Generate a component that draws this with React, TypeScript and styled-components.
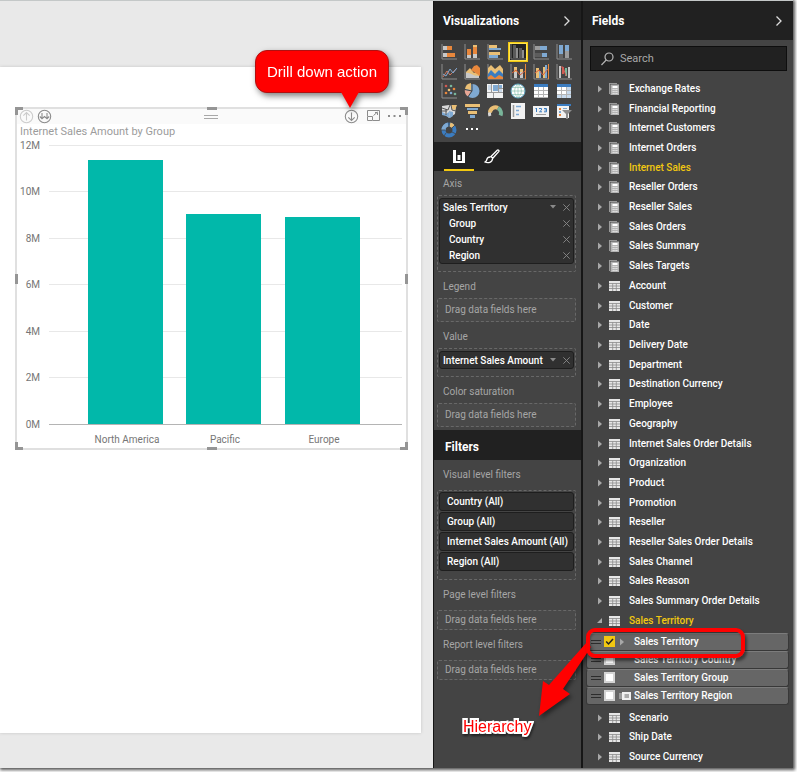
import React from "react";
import styled, { createGlobalStyle, css } from "styled-components";

const UI_FONT = 'Roboto, "Open Sans", sans-serif';

const C = {
  panel: "#444444",
  dark: "#212121",
  card: "#303030",
  text: "#ffffff",
  muted: "#a6a6a6",
  yellow: "#f2c811",
  teal: "#01b8aa",
  red: "#ff0000",
};

const GlobalStyle = createGlobalStyle`
  *, *::before, *::after { box-sizing: border-box; }
  body { margin: 0; background: #ffffff; font-family: ${UI_FONT}; }
  button { border: 0; padding: 0; margin: 0; background: none; color: inherit; font: inherit; cursor: pointer; }
  ul { list-style: none; margin: 0; padding: 0; }
  h2, h3, p { margin: 0; font: inherit; }
  svg { display: block; }
`;

/* ---------- window ---------- */

const Page = styled.div`
  padding: 0 4px 4px 0;
`;

const Window = styled.div`
  display: grid;
  grid-template-columns: minmax(0, 1fr) 149px 211px;
  min-height: calc(100vh - 4px);
  border-top: 1px solid #c4c8c8;
  background: #e9e9e9;
  box-shadow: 1px 1px 3px 1px #555555;
`;

/* ---------- report ---------- */

const Report = styled.main`
  display: flex;
  padding: 66px 12px 35px 0;
`;

const ReportPage = styled.section`
  flex: 1;
  min-width: 0;
  padding: 40px 13px 40px 15px;
  background: #ffffff;
  box-shadow: 0 0 3px #c4c4c4;
`;

const Visual = styled.article`
  position: relative;
  border: 2px solid #e0e0e0;
  background: #ffffff;
`;

type Corner = "tl" | "tr" | "bl" | "br";

const CornerHandle = styled.span<{ $at: Corner }>`
  position: absolute;
  width: 8px;
  height: 8px;
  border: 0 solid #959595;
  ${({ $at }) => ($at[0] === "t" ? "top: -2px; border-top-width: 3px;" : "bottom: -2px; border-bottom-width: 3px;")}
  ${({ $at }) => ($at[1] === "l" ? "left: -2px; border-left-width: 3px;" : "right: -2px; border-right-width: 3px;")}
`;

type Side = "top" | "right" | "bottom" | "left";

const EdgeHandle = styled.span<{ $side: Side }>`
  position: absolute;
  background: #959595;
  ${({ $side }) => `${$side}: -2px;`}
  ${({ $side }) =>
    $side === "top" || $side === "bottom"
      ? "left: 50%; width: 10px; height: 3px; margin-left: -5px;"
      : "top: 50%; width: 3px; height: 10px; margin-top: -5px;"}
`;

const VisualToolbar = styled.div`
  display: grid;
  grid-template-columns: 1fr auto 1fr;
  align-items: center;
  height: 15px;
  padding: 0 4px 0 2px;
  background: #fafafa;
`;

const ToolGroup = styled.div<{ $end?: boolean }>`
  display: flex;
  align-items: center;
  gap: ${({ $end }) => ($end ? 8 : 3)}px;
  justify-content: ${({ $end }) => ($end ? "flex-end" : "flex-start")};
`;

const ToolButton = styled.button<{ $faded?: boolean }>`
  position: relative;
  color: ${({ $faded }) => ($faded ? "#cccccc" : "#8c8c8c")};
`;

const Grip = styled.span`
  width: 14px;
  height: 4px;
  border: solid #a8a8a8;
  border-width: 1px 0;
`;

const VisualTitle = styled.h3`
  padding: 0 3px;
  font-size: 11px;
  line-height: 15px;
  color: #9c9c9c;
  white-space: nowrap;
`;

const Chart = styled.svg`
  width: 100%;
  height: auto;
  font-family: ${UI_FONT};
  font-size: 10px;
  fill: #767676;
`;

const Callout = styled.span`
  position: absolute;
  right: -30px;
  bottom: 31px;
  z-index: 2;
  padding: 0 11px 0 11px;
  border: 1px solid #b01010;
  border-radius: 12px;
  background: ${C.red};
  color: #ffffff;
  font: 15px/41px "Liberation Sans", Arial, sans-serif;
  white-space: nowrap;
  filter: drop-shadow(2px 3px 3px rgba(0, 0, 0, 0.5));
  &::after {
    content: "";
    position: absolute;
    right: 29px;
    top: 100%;
    border: solid transparent;
    border-width: 16px 9px 0 9px;
    border-top-color: ${C.red};
  }
`;

/* ---------- shared pane parts ---------- */

const Pane = styled.aside`
  display: flex;
  flex-direction: column;
  min-width: 0;
  border-left: 1px solid #161616;
  background: ${C.panel};
  color: ${C.text};
`;

const VizPane = styled(Pane)`
  border-right: 1px solid #161616;
`;

const PaneHeader = styled.header`
  display: flex;
  align-items: center;
  justify-content: space-between;
  height: 39px;
  padding: 0 10px 0 9px;
  background: ${C.dark};
  font: 700 12px/16px ${UI_FONT};
  color: #ffffff;
`;

const FiltersHeader = styled(PaneHeader)`
  height: 30px;
  margin-top: 3px;
  padding: 4px 11px 0;
`;

/* ---------- visualizations ---------- */

const Gallery = styled.div`
  display: grid;
  grid-template-columns: repeat(6, 16px);
  justify-content: space-between;
  align-content: space-between;
  height: 102px;
  padding: 4px 9px 4px 7px;
`;

const GalleryButton = styled.button<{ $active?: boolean }>`
  width: 16px;
  height: 16px;
  ${({ $active }) =>
    $active &&
    css`
      outline: 1px solid #ffe44d;
      box-shadow: 0 0 0 2px ${C.yellow};
      background: #222222;
    `}
`;

const Tabs = styled.div`
  display: flex;
  gap: 3px;
  height: 29px;
  padding: 0 10px;
  background: ${C.dark};
`;

const Tab = styled.button<{ $active?: boolean }>`
  display: flex;
  align-items: center;
  justify-content: center;
  width: 30px;
  padding-top: 2px;
  border-bottom: 2px solid ${({ $active }) => ($active ? C.yellow : "transparent")};
`;

const WellLabel = styled.p<{ $kind?: "first" | "filter" }>`
  padding: ${({ $kind }) => ($kind === "filter" ? "7px 9px 7px" : $kind === "first" ? "5px 9px 3px" : "7px 9px 3px")};
  font-size: 10px;
  line-height: 16px;
  color: ${C.muted};
`;

const Well = styled.div<{ $filled?: boolean }>`
  display: grid;
  grid-template-columns: minmax(0, 1fr);
  gap: 1px;
  margin: 0 5px 0 3px;
  padding: ${({ $filled }) => ($filled ? "2px 1px 7px" : "0 7px")};
  border: 1px dashed #686868;
  border-radius: 2px;
  background: ${({ $filled }) => ($filled ? "#444444" : "#494949")};
`;

const FilterWell = styled(Well)`
  padding: 1px 1px 8px;
`;

const WellHint = styled.p<{ $short?: boolean }>`
  font-size: 10px;
  line-height: ${({ $short }) => ($short ? 18 : 22)}px;
  color: ${C.muted};
`;

const Card = styled.div`
  padding: 0 3px;
  border: 1px solid #1e1e1e;
  border-radius: 3px;
  background: ${C.card};
`;

const CardRow = styled.div<{ $indent?: boolean }>`
  display: flex;
  align-items: center;
  height: 16px;
  padding-left: ${({ $indent }) => ($indent ? 6 : 0)}px;
  font-size: 10px;
  font-weight: 500;
  white-space: nowrap;
`;

const CardName = styled.span`
  flex: 1;
`;

const CardAction = styled.button`
  display: flex;
  justify-content: center;
  width: 8px;
  margin-left: 5px;
  color: #8a8a8a;
`;

const FilterCard = styled.button`
  height: 19px;
  padding: 0 7px;
  border: 1px solid #1e1e1e;
  border-radius: 3px;
  background: ${C.card};
  font-size: 10px;
  font-weight: 500;
  line-height: 17px;
  text-align: left;
  white-space: nowrap;
`;

/* ---------- fields ---------- */

const Search = styled.label`
  display: flex;
  align-items: center;
  gap: 6px;
  height: 25px;
  margin: 6px 6px 8px 7px;
  padding: 0 10px;
  border: 1px solid #0e0e0e;
  background: ${C.dark};
  color: #b8b8b8;
`;

const SearchInput = styled.input`
  flex: 1;
  min-width: 0;
  border: 0;
  padding: 0;
  outline: 0;
  background: transparent;
  color: #ffffff;
  font: 11px/16px ${UI_FONT};
  &::placeholder {
    color: #a8a8a8;
    opacity: 1;
  }
`;

const FieldTree = styled.ul`
  display: flex;
  flex: 1;
  flex-direction: column;
  padding-bottom: 1px;
`;

const TableItem = styled.li`
  display: flex;
  flex: 1 0 18px;
`;

const TableRow = styled.button<{ $active?: boolean }>`
  display: flex;
  flex: 1;
  align-items: center;
  padding-left: 14px;
  font-size: 10px;
  font-weight: 500;
  line-height: 16px;
  white-space: nowrap;
  color: ${({ $active }) => ($active ? C.yellow : C.text)};
`;

const Expander = styled.span`
  width: 12px;
  color: #a8a8a8;
`;

const TableGlyph = styled.span`
  width: 20px;
`;

const MemberGroup = styled.li`
  padding: 2px 4px 3px 3px;
`;

const Member = styled.div`
  position: relative;
  display: flex;
  align-items: center;
  height: 18px;
  padding-left: 4px;
  border: 1px solid #383838;
  border-top-color: #7c7c7c;
  border-radius: 3px;
  background: #666666;
  font-size: 10px;
  font-weight: 500;
`;

const MemberGrip = styled.span`
  width: 10px;
  height: 4px;
  margin-right: 3px;
  border: solid #2c2c2c;
  border-width: 1px 0;
`;

const MemberLabel = styled.label`
  display: flex;
  align-items: center;
  white-space: nowrap;
`;

const CheckBox = styled.input`
  appearance: none;
  width: 11px;
  height: 11px;
  margin: 0;
  border: 2px solid #d4d4d4;
  background: #ffffff;
  &:checked {
    border: 0;
    background: ${C.yellow};
  }
`;

const CheckWrap = styled.span`
  display: grid;
  > * { grid-area: 1 / 1; }
  > svg { pointer-events: none; }
`;

const MemberGlyph = styled.span`
  display: flex;
  align-items: center;
  width: 19px;
  padding-left: 4px;
  color: #a8a8a8;
`;

const MarkBox = styled.span`
  position: absolute;
  z-index: 3;
  left: -1px;
  right: 43px;
  top: -6px;
  height: 30px;
  border: 4px solid ${C.red};
  border-radius: 9px;
  box-shadow: 2px 3px 3px rgba(0, 0, 0, 0.45), inset 1px 2px 2px rgba(0, 0, 0, 0.25);
  pointer-events: none;
`;

const MarkArrow = styled.svg`
  position: absolute;
  z-index: 3;
  left: -50px;
  top: 8px;
  pointer-events: none;
  filter: drop-shadow(2px 3px 2px rgba(0, 0, 0, 0.45));
`;

const MarkText = styled.span`
  position: absolute;
  z-index: 3;
  left: -124px;
  top: 83px;
  color: ${C.red};
  font: 16px/20px "Liberation Sans", Arial, sans-serif;
  -webkit-text-stroke: 4px #ffffff;
  paint-order: stroke fill;
  filter: drop-shadow(1px 2px 1px rgba(0, 0, 0, 0.5));
`;

/* ---------- small icons ---------- */

const Chevron = () => (
  <svg width="8" height="12" viewBox="0 0 8 12" fill="none" stroke="#dddddd" strokeWidth="1.3">
    <path d="M1.500 1.500 6 6l-4.500 4.500" />
  </svg>
);

const DrillUp = () => (
  <svg width="15" height="15" viewBox="0 0 15 15" fill="none" stroke="currentColor" strokeWidth="1.1">
    <circle cx="7.500" cy="7.500" r="6.200" />
    <path d="M7.500 11.500v-8M4.300 6.700l3.200-3.200 3.200 3.200" />
  </svg>
);

const DrillAll = () => (
  <svg width="15" height="15" viewBox="0 0 15 15" fill="none" stroke="currentColor" strokeWidth="1.1">
    <circle cx="7.500" cy="7.500" r="6.200" />
    <path d="M5 4v5.500M2.800 7.500 5 9.700l2.500-2.200L10 9.700l2.200-2.200M10 4v5.500" />
  </svg>
);

const DrillDown = () => (
  <svg width="15" height="15" viewBox="0 0 15 15" fill="none" stroke="currentColor" strokeWidth="1.1">
    <circle cx="7.500" cy="7.500" r="6.200" />
    <path d="M7.500 3.500v8M4.300 8.300l3.200 3.200 3.200-3.200" />
  </svg>
);

const Focus = () => (
  <svg width="13" height="13" viewBox="0 0 13 13" fill="none" stroke="currentColor">
    <path d="M.5 6V.500h12v10H6M.5 6.500h5v4h-5zM6.500 5.500 10.500 2M8 2.500h2.500V5" />
  </svg>
);

const Dots = () => (
  <svg width="14" height="14" viewBox="0 0 14 14" fill="currentColor">
    <path d="M0 5h2v2H0zM5.500 5h2v2h-2zM11 5h2v2h-2z" />
  </svg>
);

const Caret = () => (
  <svg width="6" height="4" viewBox="0 0 6 4" fill="currentColor">
    <path d="M0 0h6L3 3.500z" />
  </svg>
);

const Cross = () => (
  <svg width="7" height="7" viewBox="0 0 7 7" stroke="currentColor" strokeWidth=".9">
    <path d="M.3.3l6.400 6.400M6.700.3.300 6.700" />
  </svg>
);

const Triangle = ({ open }: { open?: boolean }) => (
  <svg width="6" height="8" viewBox="0 0 6 8" fill="currentColor">
    <path d={open ? "M5 1v5H0z" : "M1 .5 5 4 1 7.500z"} />
  </svg>
);

const CubeIcon = () => (
  <svg width="10" height="12" viewBox="0 0 10 12">
    <path d="M0 0h8v1H1v10H0z" fill="#9a9a9a" />
    <path d="M1.500 1.500H10V12H1.500z" fill="#b4b4b4" />
    <path d="M3.500 3h5v2h-5z" fill="#ffffff" />
    <path d="M3.500 6.500h5M3.500 8.500h5M3.500 10.500h5" stroke="#e4e4e4" strokeWidth="1.200" strokeDasharray="1.400 .4" />
  </svg>
);

const TableIcon = () => (
  <svg width="11" height="10" viewBox="0 0 11 10">
    <path d="M0 0h11v10H0z" fill="#e6e6e6" />
    <path d="M0 2.500h11M0 5h11M0 7.500h11M3.700 2.500V10M7.300 2.500V10" stroke="#8a8a8a" strokeWidth=".8" />
  </svg>
);

const SearchIcon = () => (
  <svg width="13" height="14" viewBox="0 0 13 14" fill="none" stroke="currentColor" strokeWidth="1.200">
    <circle cx="8" cy="5" r="4" />
    <path d="M5.200 8 .5 13" />
  </svg>
);

const Tick = () => (
  <svg width="11" height="11" viewBox="0 0 11 11" fill="none" stroke="#222222" strokeWidth="1.500">
    <path d="M2.200 5.500 4.500 8l4.500-5" />
  </svg>
);

const KeyCard = () => (
  <svg width="12" height="8" viewBox="0 0 12 8">
    <path d="M0 1h3v6H0z" fill="#9a9a9a" />
    <path d="M3 0h9v8H3z" fill="#f0f0f0" />
    <path d="M5.500 3h4.500M5.500 5h4.500" stroke="#666666" />
  </svg>
);

const ColumnsIcon = () => (
  <svg width="12" height="13" viewBox="0 0 12 13" fill="#ffffff">
    <path d="M0 0h3v13H0zM4.500 5h3v5h-3zM9 2h3v11H9zM0 11h12v2H0z" />
  </svg>
);

const BrushIcon = () => (
  <svg width="16" height="15" viewBox="0 0 16 15" fill="none" stroke="#ffffff" strokeWidth="1.300" strokeLinejoin="round">
    <path d="M7 7.500 13.200 1.200c1-.8 2.300.4 1.500 1.400L8.800 9.200zM6.500 8C4.200 7.800 3 9.200 2.700 11c-.2 1-.9 1.700-1.900 2 3.400 1.500 7.600.3 7.700-3.200" />
  </svg>
);

/* ---------- visual gallery ---------- */

const O = "#e8873c";
const T = "#eabf75";
const B = "#7fa9d2";
const D = "#3b7cc0";
const G = "#9c9c9c";
const S = "#666666";
const W = "#f2f2f2";
const axes = <path d="M1 0v15h15" fill="none" stroke="#8e8e8e" />;

const f = (fill: string, d: string) => <path fill={fill} d={d} />;
const l = (stroke: string, d: string, w = 1) => <path fill="none" stroke={stroke} strokeWidth={w} d={d} />;

const gallery: { name: string; active?: boolean; art: React.ReactNode }[] = [
  { name: "Stacked bar chart", art: <>{axes}{f(O, "M6 2h5v4H6zM5 9h9v4H5z")}{f("#c8c8c8", "M2 2h4v4H2zM2 9h4v4H2z")}</> },
  { name: "Stacked column chart", art: <>{axes}{f(O, "M3 5h4v6H3zM9 2h4v8H9z")}{f("#c8c8c8", "M3 11h4v3H3zM9 10h4v4H9z")}{f(T, "M9 1h4v2H9z")}</> },
  { name: "Clustered bar chart", art: <>{axes}{f(T, "M2 1h8v3H2zM2 8h11v3H2z")}{f(B, "M2 4h12v2H2zM2 11h9v3H2z")}</> },
  { name: "Clustered column chart", active: true, art: <>{l("#777777", "M1 0v15h15")}{f("#5a5a5a", "M3 1h3v13H3zM9 4h3v10H9z")}{f("#8e8e8e", "M6 4h2v10H6zM12 6h2v8h-2z")}</> },
  { name: "100% stacked bar chart", art: <>{axes}{f(B, "M7 2h7v4H7zM9 9h5v4H9z")}{f(G, "M2 2h5v4H2z")}{f("#5c5c5c", "M2 9h7v4H2z")}</> },
  { name: "100% stacked column chart", art: <>{axes}{f(B, "M3 1h4v9H3zM9 1h4v6H9z")}{f(S, "M3 10h4v4H3z")}{f(G, "M9 7h4v7H9z")}</> },
  { name: "Line chart", art: <>{axes}{l("#d0775c", "M2 13 6 7l3 4 6-6")}{l(B, "M2 10l3 2 4-7 3 4 4-5")}</> },
  { name: "Area chart", art: <>{axes}{f(T, "M2 8l4-4 4 5 5-3v8H2z")}{f(O, "M7 6l3-4 3-1 3 3v8z")}{f("#c8c8c8", "M2 9c4-1 6 3 13 3v2H2z")}</> },
  { name: "Stacked area chart", art: <>{axes}{f(T, "M1 4l3-3 4 4 5-4 3 4v7H1z")}{f(D, "M1 10l3-4 4 4 4-4 4 4v5H1z")}{f(O, "M1 13l3-2 4 3 4-3 4 2v2H1z")}</> },
  { name: "Line and stacked column chart", art: <>{axes}{f(T, "M4 3h3v5H4zM10 5h3v3h-3z")}{f("#c8c8c8", "M4 8h3v6H4zM10 8h3v6h-3z")}{l("#d8603c", "M2 9l4-3 4 5 5-4")}{l(O, "M15.500 0v15")}</> },
  { name: "Line and clustered column chart", art: <>{axes}{f(T, "M3 4h3v10H3zM10 3h2v11h-2z")}{f(B, "M6 7h2v7H6zM12 1h2v13h-2z")}{l("#d8603c", "M2 9l4-3 4 5 5-6")}{l(O, "M15.500 0v15")}</> },
  { name: "Waterfall chart", art: <>{axes}{f("#d05b52", "M6 3h2v7H6z")}{f("#79b59a", "M9 4h2v8H9z")}{f("#c8c8c8", "M3 2h2v12H3zM12 3h2v11h-2z")}{l("#d05b52", "M5 3h2l3 9")}</> },
  { name: "Scatter chart", art: <>{axes}{[[5, 3, "#d05b52"], [10, 3, "#79b59a"], [5, 10, O], [8, 7, T], [13, 6, O], [10, 10, B], [14, 11, "#79b59a"]].map(([x, y, c]) => <circle key={`${x}-${y}`} cx={x} cy={y} r="1.300" fill={String(c)} />)}</> },
  { name: "Pie chart", art: <><circle cx="8.500" cy="8" r="7" fill={B} />{f(T, "M7 7V0a7 7 0 0 0-6 6z")}{f("#e8a796", "M7 8 .8 7A7 7 0 0 0 4 13.500z")}{l("#444444", "M8 8V0M8 8 1 6.500M8 8l-4.500 6.500")}</> },
  { name: "Treemap", art: <>{f(W, "M0 1h16v14H0z")}{f(B, "M6 2h5v6H6zM12 2h3v3h-3z")}{f("#c9d8e8", "M1 2h3v5H1zM12 6h3v3h-3z")}{l("#9a9a9a", "M4.500 1v8M11.500 1v8M0 9.500h16M6.500 9v6M12 5.500h4")}</> },
  { name: "Map", art: <><circle cx="8" cy="8" r="7" fill="#ffffff" stroke="#5a9fc0" />{l("#7dbba6", "M8 1v14M1 8h14M2.500 4.500h11M2.500 11.500h11M8 1C3.500 5 3.500 11 8 15M8 1c4.500 4 4.500 10 0 14", 0.6)}</> },
  { name: "Table", art: <>{f("#ffffff", "M1 1h14v14H1z")}{f(D, "M1 1h14v3H1z")}{l("#b4b4b4", "M1 7.500h14M1 11.500h14M5.500 4v11M10.500 4v11M1 14.500h14")}</> },
  { name: "Matrix", art: <>{f("#ffffff", "M1 1h14v14H1z")}{f("#c6d9ec", "M10 4h5v11h-5zM1 12h14v3H1z")}{f(D, "M1 1h14v3H1z")}{l("#b4b4b4", "M1 7.500h14M1 11.500h14M5.500 4v11M10.500 4v11")}</> },
  { name: "Filled map", art: <>{f("#d8d8d8", "M1 3l7-1 7 1-1 8-6 4-3-3-4-2z")}{f(B, "M1 9l4 2 3-2 1 6-4-2-4-1z")}{f(T, "M10 2h6l-2 5-3-1z")}{f(B, "M8 8l4 1 0 4-3 2z")}{l("#555555", "M1 5l6 2 2-5M5 6v6M10 2l1 5 4 1M1 8h5")}</> },
  { name: "Funnel", art: <>{f(T, "M1 1h15v3H1zM4 8h9v3H4z")}{f(B, "M3 5h11v2H3zM6 12h5v3H6z")}</> },
  { name: "Gauge", art: <>{l("#d7d7d7", "M3 13A6 6 0 0 1 5 6", 3)}{l(T, "M3 9.500A5.500 5.500 0 0 1 11 5", 4)}{l("#79b59a", "M11 5A6 6 0 0 1 13.500 12.500", 4)}</> },
  { name: "Multi-row card", art: <>{f(W, "M1 0h14v16H1z")}{l("#9a9a9a", "M3.500 2v12", 1.500)}{l(B, "M6 3.500h5M6 7.500h3M6 11.500h3", 1.500)}</> },
  { name: "Card", art: <>{f(W, "M0 3h16v11H0z")}{l(D, "M3.500 5v4M2.500 5.500h1M6 5.500h2.500v1.500L6.500 8.800h2.500M11 5.500h2.500v3.300H11M11.500 7h2")}{l("#999999", "M3 11.500h10")}</> },
  { name: "Slicer", art: <>{f(W, "M1 1h12v14H1z")}{f(D, "M1 1h14v2H1z")}{f(O, "M3 5h2v2H3zM3 11h2v2H3z")}{f(B, "M3 8h2v2H3zM7 5h4v1H7z")}{f("#8c8c8c", "M6 7h10l-4 4v5h-2v-5z")}</> },
  { name: "Donut chart", art: <><circle cx="8" cy="8" r="5.500" fill="none" stroke={D} strokeWidth="4" />{l(B, "M2.500 8A5.500 5.500 0 0 1 7 2.500", 4)}{l(T, "M9 2.500A5.500 5.500 0 0 1 12 4.500", 4)}{l("#444444", "M8 0v5M14 3l-3 3M0 8h4M3 14l2-3M15 12l-4-2", 0.8)}</> },
  { name: "More visuals", art: <>{f("#ffffff", "M2 6h2v2H2zM7 6h2v2H7zM12 6h2v2h-2z")}</> },
];

/* ---------- chart ---------- */

const CHART = { left: 32, right: 385, top: 6, bottom: 285, max: 12 };
const sales = [
  { group: "North America", value: 11.35 },
  { group: "Pacific", value: 9.03 },
  { group: "Europe", value: 8.9 },
];
const ticks = [0, 2, 4, 6, 8, 10, 12];
const yOf = (v: number) => CHART.bottom - Math.round((v / CHART.max) * (CHART.bottom - CHART.top));

const SalesChart = () => (
  <Chart viewBox="0 0 389 309" role="img" aria-label="Internet Sales Amount by Group">
    {ticks.map((t) => (
      <g key={t}>
        <rect x={CHART.left} y={yOf(t)} width={CHART.right - CHART.left} height="1" fill={t ? "#e8e8e8" : "#b4b4b4"} />
        <text x="23" y={yOf(t) + 4} textAnchor="end">{t}M</text>
      </g>
    ))}
    {sales.map((s, i) => {
      const x = 71 + Math.round(i * 98.4);
      return (
        <g key={s.group}>
          <rect x={x} y={yOf(s.value)} width="75" height={CHART.bottom - yOf(s.value)} fill={C.teal} />
          <text x={x + 39} y="304" textAnchor="middle">{s.group}</text>
        </g>
      );
    })}
  </Chart>
);

/* ---------- data ---------- */

const cubes = ["Exchange Rates", "Financial Reporting", "Internet Customers", "Internet Orders", "Internet Sales", "Reseller Orders", "Reseller Sales", "Sales Orders", "Sales Summary", "Sales Targets"];
const tables = ["Account", "Customer", "Date", "Delivery Date", "Department", "Destination Currency", "Employee", "Geography", "Internet Sales Order Details", "Organization", "Product", "Promotion", "Reseller", "Reseller Sales Order Details", "Sales Channel", "Sales Reason", "Sales Summary Order Details"];
const tablesAfter = ["Scenario", "Ship Date", "Source Currency"];
const members = ["Sales Territory", "Sales Territory Country", "Sales Territory Group", "Sales Territory Region"];
const filters = ["Country (All)", "Group (All)", "Internet Sales Amount (All)", "Region (All)"];

const FieldTable = ({ name, cube, active, open }: { name: string; cube?: boolean; active?: boolean; open?: boolean }) => (
  <TableItem>
    <TableRow $active={active} aria-expanded={!!open}>
      <Expander><Triangle open={open} /></Expander>
      <TableGlyph>{cube ? <CubeIcon /> : <TableIcon />}</TableGlyph>
      {name}
    </TableRow>
  </TableItem>
);

const WellField = ({ name, indent }: { name: string; indent?: boolean }) => (
  <CardRow $indent={indent}>
    <CardName>{name}</CardName>
    {!indent && <CardAction aria-label={`${name} options`}><Caret /></CardAction>}
    <CardAction aria-label={`Remove ${name}`}><Cross /></CardAction>
  </CardRow>
);

const EmptyWell = ({ short }: { short?: boolean }) => (
  <Well><WellHint $short={short}>Drag data fields here</WellHint></Well>
);

export default function App() {
  return (
    <Page>
      <GlobalStyle />
      <Window>
        <Report>
          <ReportPage>
            <Visual>
              <VisualToolbar>
                <ToolGroup>
                  <ToolButton $faded aria-label="Drill up"><DrillUp /></ToolButton>
                  <ToolButton aria-label="Go to the next level"><DrillAll /></ToolButton>
                </ToolGroup>
                <Grip />
                <ToolGroup $end>
                  <ToolButton aria-label="Drill down">
                    <DrillDown />
                    <Callout>Drill down action</Callout>
                  </ToolButton>
                  <ToolButton aria-label="Focus mode"><Focus /></ToolButton>
                  <ToolButton aria-label="More options"><Dots /></ToolButton>
                </ToolGroup>
              </VisualToolbar>
              <VisualTitle>Internet Sales Amount by Group</VisualTitle>
              <SalesChart />
              {(["tl", "tr", "bl", "br"] as Corner[]).map((c) => <CornerHandle key={c} $at={c} />)}
              {(["top", "right", "bottom", "left"] as Side[]).map((s) => <EdgeHandle key={s} $side={s} />)}
            </Visual>
          </ReportPage>
        </Report>

        <VizPane>
          <PaneHeader>
            <h2>Visualizations</h2>
            <button aria-label="Collapse visualizations"><Chevron /></button>
          </PaneHeader>
          <Gallery>
            {gallery.map((g) => (
              <GalleryButton key={g.name} $active={g.active} aria-label={g.name}>
                <svg width="16" height="16" viewBox="0 0 16 16">{g.art}</svg>
              </GalleryButton>
            ))}
          </Gallery>
          <Tabs>
            <Tab $active aria-label="Fields"><ColumnsIcon /></Tab>
            <Tab aria-label="Format"><BrushIcon /></Tab>
          </Tabs>

          <WellLabel $kind="first">Axis</WellLabel>
          <Well $filled>
            <Card>
              <WellField name="Sales Territory" />
              <WellField name="Group" indent />
              <WellField name="Country" indent />
              <WellField name="Region" indent />
            </Card>
          </Well>
          <WellLabel>Legend</WellLabel>
          <EmptyWell />
          <WellLabel>Value</WellLabel>
          <Well $filled>
            <Card><WellField name="Internet Sales Amount" /></Card>
          </Well>
          <WellLabel>Color saturation</WellLabel>
          <EmptyWell />

          <FiltersHeader><h2>Filters</h2></FiltersHeader>
          <WellLabel $kind="filter">Visual level filters</WellLabel>
          <FilterWell $filled>
            {filters.map((x) => <FilterCard key={x}>{x}</FilterCard>)}
          </FilterWell>
          <WellLabel $kind="filter">Page level filters</WellLabel>
          <EmptyWell short />
          <WellLabel $kind="filter">Report level filters</WellLabel>
          <EmptyWell short />
        </VizPane>

        <Pane>
          <PaneHeader>
            <h2>Fields</h2>
            <button aria-label="Collapse fields"><Chevron /></button>
          </PaneHeader>
          <Search>
            <SearchIcon />
            <SearchInput type="text" placeholder="Search" aria-label="Search" />
          </Search>
          <FieldTree>
            {cubes.map((n) => <FieldTable key={n} name={n} cube active={n === "Internet Sales"} />)}
            {tables.map((n) => <FieldTable key={n} name={n} />)}
            <FieldTable name="Sales Territory" active open />
            <MemberGroup>
              {members.map((n, i) => (
                <Member key={n}>
                  <MemberGrip />
                  <MemberLabel>
                    <CheckWrap>
                      <CheckBox type="checkbox" defaultChecked={i === 0} />
                      {i === 0 && <Tick />}
                    </CheckWrap>
                    <MemberGlyph>
                      {i === 0 && <Triangle />}
                      {i === 3 && <KeyCard />}
                    </MemberGlyph>
                    {n}
                  </MemberLabel>
                  {i === 0 && (
                    <>
                      <MarkArrow width="56" height="76" viewBox="0 0 56 76" fill={C.red}>
                        <path d="M50 0 54 5 26 47l7 5L2 74 6 39l6 4z" />
                      </MarkArrow>
                      <MarkBox />
                      <MarkText>Hierarchy</MarkText>
                    </>
                  )}
                </Member>
              ))}
            </MemberGroup>
            {tablesAfter.map((n) => <FieldTable key={n} name={n} />)}
          </FieldTree>
        </Pane>
      </Window>
    </Page>
  );
}
